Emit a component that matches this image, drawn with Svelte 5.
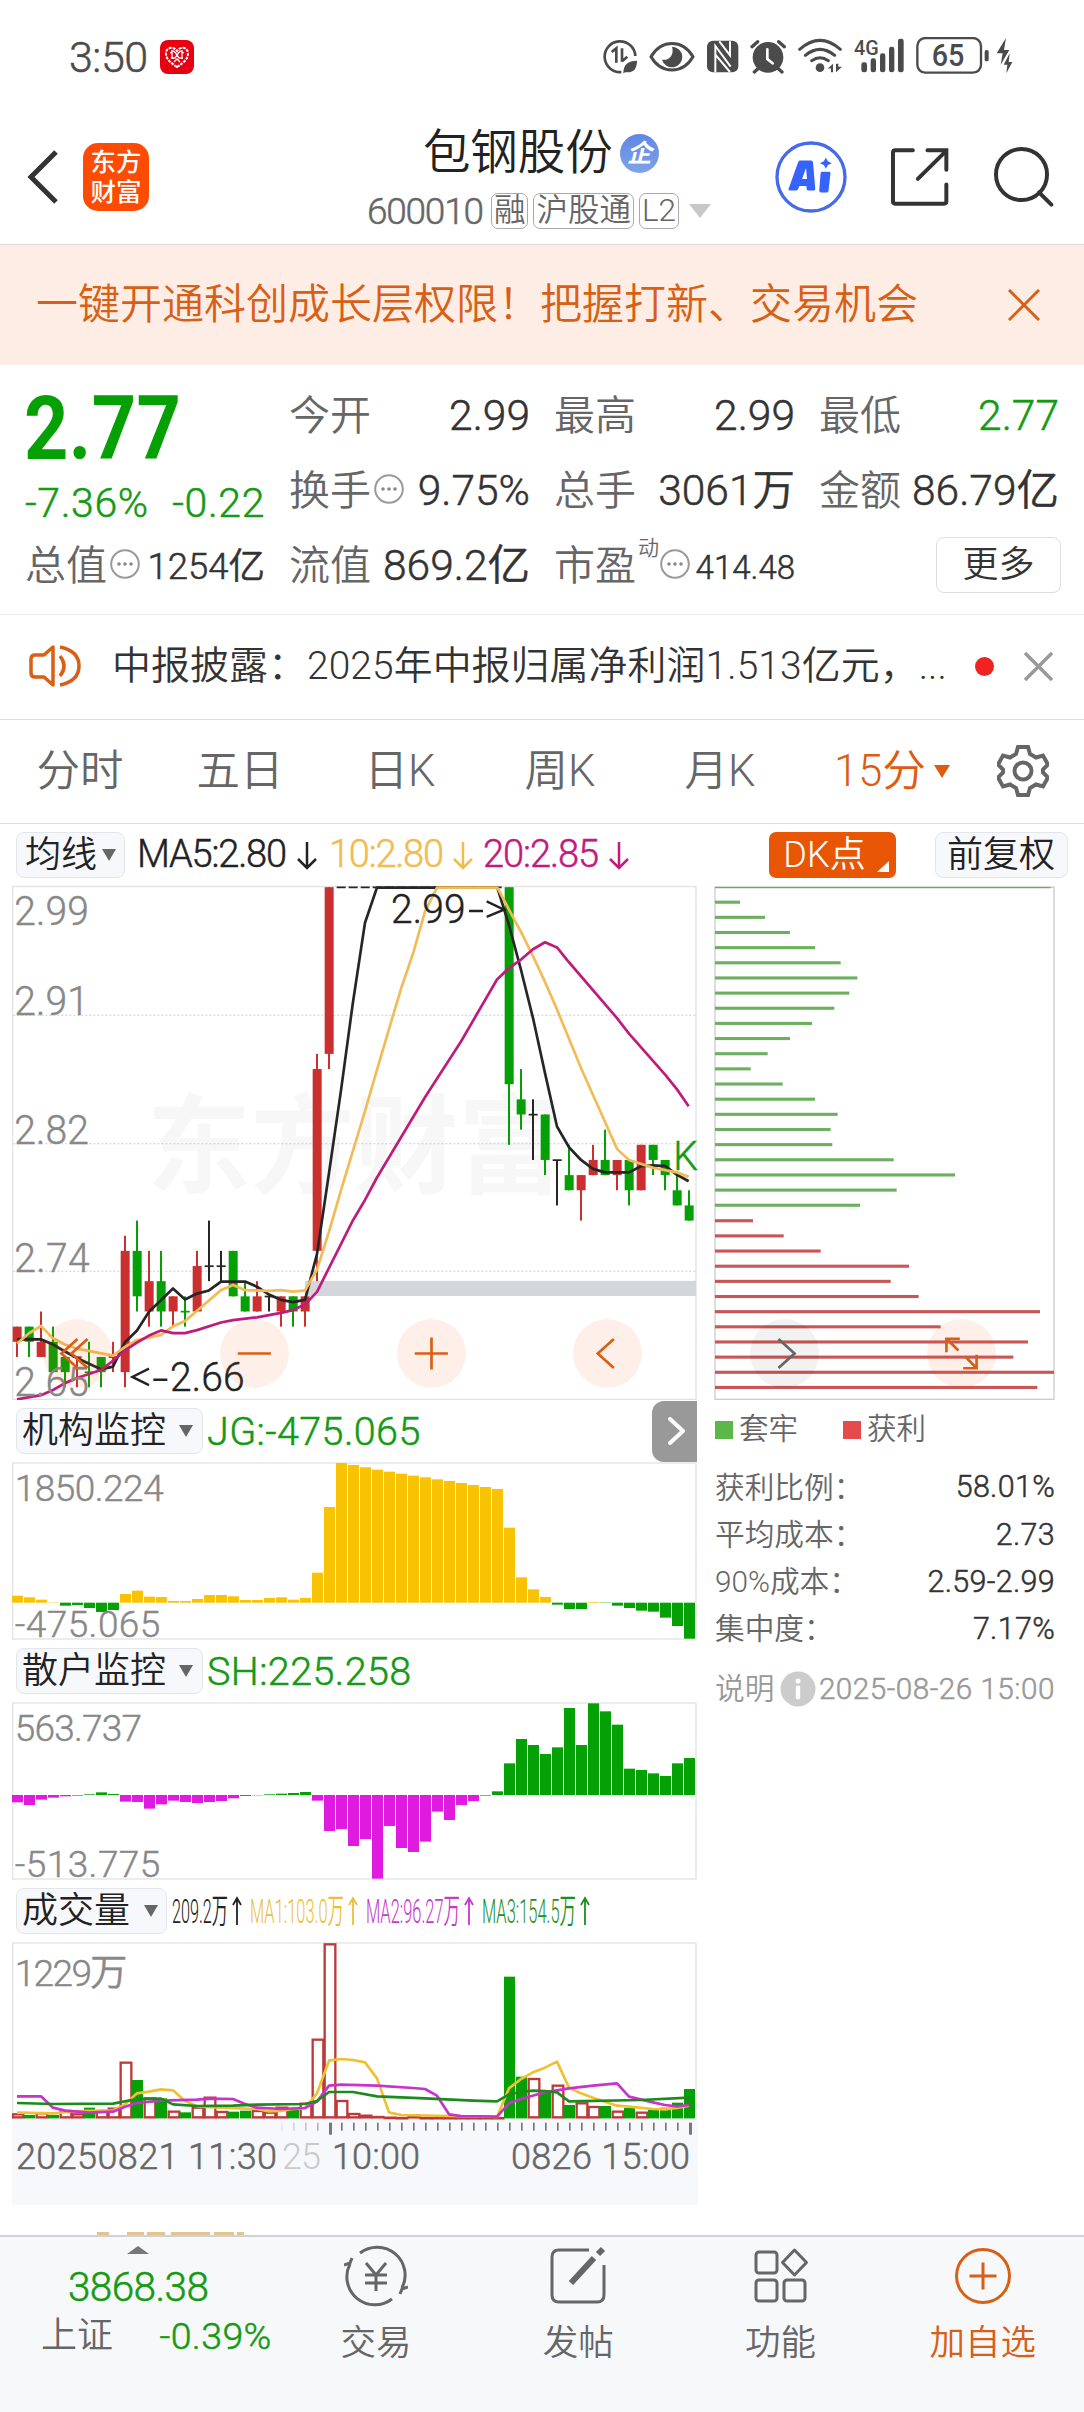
<script lang="ts">
    type Candle = [string, number, number, number, number];
    type Point = [number, number];

    const tabs = ["分时", "五日", "日K", "周K", "月K"];
    let activeTab = "15分";

    // colour, wick top, wick bottom, body top, body bottom (cents under 2.99)
    const candles: Candle[] = [
        ["r", 29, 31, 29, 30], ["g", 29, 31, 29, 30], ["r", 28, 31, 30, 31],
        ["g", 29, 32, 30, 32], ["g", 31, 33, 31, 32], ["r", 31, 33, 31, 31],
        ["g", 30, 33, 32, 32], ["g", 31, 33, 31, 32], ["r", 30, 32, 31, 31],
        ["r", 23, 33, 24, 32], ["g", 22, 28, 24, 27], ["r", 24, 29, 26, 28],
        ["g", 24, 29, 26, 28], ["r", 27, 29, 27, 28], ["g", 27, 29, 28, 28],
        ["r", 24, 28, 25, 28], ["k", 22, 26, 25, 25], ["k", 24, 26, 25, 25],
        ["g", 24, 27, 24, 27], ["g", 26, 28, 27, 28], ["r", 26, 28, 27, 28],
        ["k", 27, 28, 27, 27], ["r", 27, 29, 27, 28], ["g", 27, 29, 27, 28],
        ["r", 27, 29, 27, 28], ["r", 11, 26, 12, 24], ["r", 0, 12, 0, 11],
        ...Array.from({ length: 14 }, () => ["k", 0, 0, 0, 0] as Candle),
        ["g", 0, 17, 0, 13], ["g", 12, 16, 14, 15], ["k", 14, 18, 15, 15],
        ["g", 15, 19, 15, 18], ["k", 18, 21, 18, 18], ["g", 17, 20, 19, 20],
        ["r", 19, 22, 19, 20], ["r", 17, 19, 18, 19], ["g", 16, 19, 18, 19],
        ["r", 18, 20, 18, 19], ["g", 18, 21, 18, 20], ["r", 17, 20, 17, 20],
        ["g", 17, 19, 17, 18], ["g", 18, 20, 18, 19], ["g", 19, 21, 20, 21],
        ["g", 20, 22, 21, 22],
    ];
    const candleColor: Record<string, string> = { r: "#cc2f2f", g: "#05a005", k: "#262626" };

    const ma5 =
        "51,1363 87,1362 123,1363 159,1378 195,1398 231,1417 267,1434 303,1450 339,1442 375,1371 411,1337 447,1283 519,1215 555,1247 591,1230 627,1221 663,1195 735,1195 771,1210 807,1233 843,1248 879,1255 915,1248 951,1115 987,880 1023,640 1058,390 1095,153 1131,51 1492,51 1527,160 1563,290 1599,430 1635,590 1671,745 1707,805 1743,842 1779,868 1815,878 1887,878 1923,860 1960,858 1996,860 2031,885 2066,904";
    const ma10 =
        "51,1375 87,1345 123,1324 159,1360 195,1378 231,1390 339,1410 375,1385 411,1365 483,1350 519,1325 555,1310 591,1280 663,1220 699,1205 735,1220 807,1222 843,1220 879,1224 915,1221 951,1160 987,1050 1023,930 1059,815 1095,700 1131,580 1167,462 1203,345 1240,240 1275,120 1311,51 1492,51 1527,115 1563,180 1599,250 1635,325 1671,405 1743,575 1851,810 1887,842 1960,865 2031,878 2066,891";
    const ma20 =
        "51,1537 123,1525 159,1510 195,1490 231,1475 303,1452 339,1425 375,1395 411,1372 447,1352 483,1337 519,1345 555,1345 591,1336 663,1314 699,1307 771,1299 843,1286 879,1278 915,1262 951,1225 1059,1017 1095,958 1131,893 1275,660 1383,498 1491,318 1527,285 1563,260 1599,230 1635,210 1671,225 1707,268 1851,430 1887,475 1996,595 2031,637 2066,686";

    // holding cost spread, one row per cent
    const trapped = [
        1007, 75, 150, 225, 300, 377, 427, 403, 358, 291, 225, 158, 107, 203, 300, 368, 347, 352,
        536, 720, 545, 435,
    ];
    const profit = [114, 206, 317, 582, 527, 611, 975, 677, 939, 895, 1017, 967];

    const jg = [
        21, 16, 9, 1, -9, -7, -16, -28, -22, 26, 36, 18, 17, 5, 5, 11, 23, 23, 19, 8, 8, 14, 16, 9,
        14, 90, 287, 419, 413, 406, 399, 393, 387, 381, 376, 370, 365, 359, 353, 347, 341, 225, 76,
        40, 17, -6, -19, -19, 2, -1, -9, -16, -24, -27, -45, -70, -108,
    ];
    const sh = [
        -22, -30, -14, -8, -4, -2, 2, 8, 3, -20, -21, -41, -28, -17, -21, -24, -21, -18, -10, -3, -1,
        2, 4, 6, 9, -17, -108, -102, -153, -132, -251, -93, -159, -171, -140, -50, -75, -30, -18, -2,
        11, 95, 168, 150, 123, 143, 261, 150, 275, 251, 211, 79, 75, 65, 57, 95, 111,
    ];

    const volume = [
        15, 10, 18, 10, 25, 15, 32, 25, 32, 170, 115, 63, 60, 23, 18, 35, 65, 22, 20, 23, 25, 20, 35,
        25, 47, 239, 525, 55, 16, 11, 7, 5, 4, 12, 4, 4, 4, 4, 4, 4, 4, 425, 125, 121, 80, 101, 40,
        48, 37, 37, 23, 31, 20, 25, 32, 47, 88,
    ];
    const volumeRed = [
        0, 2, 4, 5, 7, 8, 9, 11, 13, 15, 16, 17, 20, 21, 22, 24, 25, 26, 27, 28, 29, 30, 31, 32, 33,
        34, 35, 36, 37, 38, 39, 40, 43, 45, 47, 48, 50, 52,
    ];

    const vma1: Point[] = [
        [0, 17], [3, 15], [5, 22], [8, 24], [9, 42], [10, 75], [11, 80], [12, 87], [13, 84],
        [14, 52], [15, 36], [17, 32], [20, 28], [21, 21], [22, 22], [23, 28], [24, 30], [25, 75],
        [26, 173], [27, 178], [28, 175], [29, 168], [30, 120], [31, 18], [32, 10], [36, 7],
        [40, 4], [41, 90], [42, 118], [43, 138], [44, 152], [45, 170], [46, 92], [47, 75],
        [48, 62], [50, 38], [51, 35], [53, 28], [54, 27], [55, 31], [56, 38],
    ];
    const vma2: Point[] = [
        [0, 66], [2, 66], [3, 32], [4, 23], [6, 17], [8, 20], [9, 35], [10, 46], [12, 53],
        [15, 56], [16, 59], [18, 58], [19, 43], [20, 32], [22, 28], [24, 31], [25, 50], [26, 98],
        [27, 101], [30, 98], [33, 91], [34, 88], [35, 68], [36, 12], [37, 7], [40, 5], [41, 45],
        [42, 58], [44, 78], [46, 90], [48, 98], [50, 105], [51, 65], [53, 48], [54, 40], [55, 36],
        [56, 40],
    ];
    const vma3: Point[] = [
        [0, 46], [3, 43], [8, 44], [10, 58], [12, 59], [13, 42], [15, 37], [18, 38], [20, 41],
        [24, 43], [25, 52], [26, 79], [28, 79], [30, 66], [34, 60], [38, 53], [40, 51], [41, 72],
        [42, 79], [43, 83], [44, 82], [45, 78], [46, 51], [52, 55], [56, 62],
    ];

    const line = (points: Point[]) =>
        points.map(([i, v]) => `${51 + i * 36},${745 - v}`).join(" ");

    const costs = [
        ["获利比例：", "58.01%"],
        ["平均成本：", "2.73"],
        ["90%成本：", "2.59-2.99"],
        ["集中度：", "7.17%"],
    ];
</script>

{#snippet dots()}
    <svg class="dots" viewBox="0 0 30 30">
        <circle cx="15" cy="15" r="13.8" fill="none" stroke="#999" stroke-width="2" />
        <circle cx="9" cy="15" r="1.8" fill="#888" />
        <circle cx="15" cy="15" r="1.8" fill="#888" />
        <circle cx="21" cy="15" r="1.8" fill="#888" />
    </svg>
{/snippet}

<div class="page">
    <div class="status">
        <span class="time">3:50</span>
        <svg class="app-dot" viewBox="0 0 34 34">
            <rect width="34" height="34" rx="8" fill="#e60012" />
            <path d="M17 27C9 22 6 18 6 13.500C6 7 14 6 17 11C20 6 28 7 28 13.500C28 18 25 22 17 27Z" fill="none" stroke="#fff" stroke-width="2" stroke-dasharray="3 1" />
            <path d="M10 13l4-2 3 4 3-4 4 2M11 18h4l2-3 2 3h4M14 22l3-3 3 3M12 10v9M22 10v9" fill="none" stroke="#fff" stroke-width="1.300" />
        </svg>
        <svg class="status-icons" viewBox="27 39 1230 111" fill="#4b4b4b" stroke="none">
            <path d="M82 144A46 46 0 1 1 124 96" fill="none" stroke="#4b4b4b" stroke-width="8" />
            <path d="M53 84l14-11v43M84 73v40M84 112l16-14" fill="none" stroke="#4b4b4b" stroke-width="8" />
            <path d="M88 148c0-26 14-38 41-38c0 26-12 38-36 34l16-18l-19 22z" />
            <path d="M171 98C202 45 266 45 297 98C266 151 202 151 171 98Z" fill="none" stroke="#4b4b4b" stroke-width="9" />
            <path d="M234 68a31 31 0 1 1-30 39c20 4 38-14 30-39z" />
            <rect x="339" y="50" width="94" height="95" rx="18" />
            <path d="M364 144V66L410 128M364 92l44 52M376 52l32 42V52" fill="none" stroke="#fff" stroke-width="6" />
            <circle cx="522" cy="100" r="46" />
            <path d="M474 68l17-15M571 68l-17-15M492 134l-11 10M553 134l11 10" stroke="#4b4b4b" stroke-width="10" stroke-linecap="round" />
            <path d="M520 76v29l16 13" fill="none" stroke="#fff" stroke-width="8" stroke-linecap="round" />
            <g fill="none" stroke="#4b4b4b" stroke-width="9" stroke-linecap="round">
                <path d="M617 76Q678 22 739 76M634 94Q678 58 722 94M653 110Q678 92 703 110" />
            </g>
            <circle cx="678" cy="131" r="13" />
            <path d="M701 134l16-15v26h-6v-12zM726 119v26l18-17h-11v-9z" />
            <g font-family="Roboto, sans-serif" font-weight="500">
                <text x="780" y="94" font-size="62" textLength="74" lengthAdjust="spacingAndGlyphs">4G</text>
                <text x="1013" y="127" font-size="92" textLength="98" lengthAdjust="spacingAndGlyphs">65</text>
            </g>
            <rect x="802" y="115" width="17" height="30" rx="7" />
            <rect x="830" y="103" width="16" height="42" rx="7" />
            <rect x="858" y="88" width="16" height="57" rx="7" />
            <rect x="885" y="68" width="16" height="77" rx="7" />
            <rect x="912" y="44" width="17" height="101" rx="7" />
            <rect x="970" y="42" width="191" height="104" rx="24" fill="none" stroke="#4b4b4b" stroke-width="7" />
            <rect x="1172" y="78" width="12" height="34" rx="5" />
            <path d="M1236 42l-28 46h18l-6 34l26-44h-16zM1247 88l-18 34h11l-3 26l18-34h-11z" />
        </svg>
    </div>

    <header class="header">
        <svg class="back" viewBox="0 0 32 56"><path d="M29 3L4 28l25 25" /></svg>
        <div class="logo"><span>东方</span><span>财富</span></div>
        <div class="title">
            <div class="name">包钢股份<span class="badge">企</span></div>
            <div class="code">
                <span class="num">600010</span>
                <span class="tag">融</span>
                <span class="tag">沪股通</span>
                <span class="tag">L2</span>
                <svg class="caret" viewBox="0 0 22 14"><path d="M0 0h22L11 14z" fill="#c8c8c8" /></svg>
            </div>
        </div>
        <svg class="ai" viewBox="547 351 218 218">
            <circle cx="656" cy="460" r="103" fill="none" stroke="#456be8" stroke-width="10" />
            <path d="M622 410h34q5 0 6 5l7 82q0 4-5 4h-16q-4 0-5-4l-1-10h-21l-5 11q-1 3-5 3h-20q-4 0-3-5l29-81q2-5 5-5zM641 432l-12 34h15zM689 444h22q4 0 4 5l-6 53q-1 5-5 5h-18q-5 0-5-5l4-53q1-5 4-5zM701 401l6 11 12 6-12 6-6 11-6-11-12-6 12-6z" fill="#3563fb" />
        </svg>
        <svg class="share" viewBox="890 370 178 178">
            <path d="M959 380h-53q-7 0-7 7v147q0 7 7 7h147q7 0 7-7v-51M1003 380h57v59M974 466l84-83" />
        </svg>
        <svg class="search" viewBox="1200 366 184 184">
            <circle cx="1286" cy="452" r="77" />
            <path d="M1339 506l37 37" />
        </svg>
    </header>

    <div class="banner">
        <span>一键开通科创成长层权限！把握打新、交易机会</span>
        <svg viewBox="0 0 32 32"><path d="M1 1l30 30M31 1L1 31" /></svg>
    </div>

    <section class="quotes">
        <div class="price">
            <div class="last">2.77</div>
            <div class="change"><span>-7.36%</span><span>-0.22</span></div>
        </div>
        <div class="cell"><label>今开</label><b>2.99</b></div>
        <div class="cell"><label>最高</label><b>2.99</b></div>
        <div class="cell"><label>最低</label><b class="down">2.77</b></div>
        <div class="cell"><label>换手</label>{@render dots()}<b>9.75%</b></div>
        <div class="cell"><label>总手</label><b>3061万</b></div>
        <div class="cell"><label>金额</label><b>86.79亿</b></div>
        <div class="cell"><label>总值</label>{@render dots()}<b class="mid">1254亿</b></div>
        <div class="cell"><label>流值</label><b>869.2亿</b></div>
        <div class="cell"><label>市盈</label><sup>动</sup>{@render dots()}<b class="small">414.48</b></div>
        <div class="cell"><button class="more">更多</button></div>
    </section>

    <div class="notice">
        <svg class="horn" viewBox="0 0 52 44">
            <path d="M24 3v38l-9-8H6q-4 0-4-4V15q0-4 4-4h9zM31 12q8 10 0 20M31 3q19 4 19 19t-19 19" />
        </svg>
        <span class="news">中报披露：2025年中报归属净利润1.513亿元，...</span>
        <i></i>
        <svg class="close" viewBox="0 0 29 29"><path d="M1 1l27 27M28 1L1 28" /></svg>
    </div>

    <nav class="tabs">
        {#each tabs as tab}
            <button class:active={activeTab === tab} on:click={() => (activeTab = tab)}>{tab}</button>
        {/each}
        <button class="period" class:active={activeTab === "15分"} on:click={() => (activeTab = "15分")}>
            15分<svg viewBox="0 0 16 13"><path d="M0 0h16L8 13z" fill="currentColor" /></svg>
        </button>
        <svg class="gear" viewBox="0 0 52 52">
            <path d="M21 2h10l2 7 6 3.500 7-2 5 9-5 5v3l5 5-5 9-7-2-6 3.500-2 7H21l-2-7-6-3.500-7 2-5-9 5-5v-3l-5-5 5-9 7 2 6-3.500z" />
            <circle cx="26" cy="26" r="8.500" />
        </svg>
    </nav>

    <div class="ma-row">
        <button class="pick ma">均线<svg viewBox="0 0 14 12"><path d="M0 0h14L7 12z" /></svg></button>
        <svg class="ma-text" viewBox="0 0 500 40">
            <g stroke-width="0.5">
                <text x="-2" y="32" textLength="150" fill="#222" stroke="#222">MA5:2.80</text>
                <text x="190" y="32" textLength="115" fill="#f2bb4e" stroke="#f2bb4e">10:2.80</text>
                <text x="344" y="32" textLength="116" fill="#c2197f" stroke="#c2197f">20:2.85</text>
            </g>
            <path d="M168 7v26M159 24l9 9 9-9" stroke="#222" />
            <path d="M324 7v26M315 24l9 9 9-9" stroke="#f2bb4e" />
            <path d="M480 7v26M471 24l9 9 9-9" stroke="#c2197f" />
        </svg>
        <button class="dk">DK点</button>
        <button class="pick adjust">前复权</button>
    </div>

    <main class="charts">
        <div class="left">
            <svg class="plot price-plot" viewBox="36 43.6 2058 1495.4" preserveAspectRatio="none">
                <text class="watermark" x="440" y="915">东方财富</text>
                <rect class="frame" x="38" y="48" width="2050" height="1489" />
                <path class="grid" d="M40 422H2086M40 795H2086M40 1165H2086" />
                <rect x="915" y="1193" width="1173" height="44" fill="#d3d7dc" />
                {#each candles as [color, top, bottom, bodyTop, bodyBottom], i}
                    <g fill={candleColor[color]}>
                        <rect x={48 + i * 36} y={50 + top * 44} width="6" height={(bottom - top) * 44} />
                        <rect
                            x={38 + i * 36}
                            y={(bodyTop === bodyBottom ? 48 : 50) + bodyTop * 44}
                            width="27"
                            height={Math.max((bodyBottom - bodyTop) * 44, 5)}
                        />
                    </g>
                {/each}
                <polyline points={ma5} stroke="#262626" />
                <polyline points={ma10} stroke="#f2bb55" />
                <polyline points={ma20} stroke="#bf1a7c" />
                <g class="axis" font-size="117">
                    <text x="43" y="160" textLength="224">2.99</text>
                    <text x="43" y="421" textLength="224">2.91</text>
                    <text x="43" y="796" textLength="224">2.82</text>
                    <text x="43" y="1167" textLength="226">2.74</text>
                    <text x="43" y="1527" textLength="224">2.65</text>
                </g>
                <g class="mark" font-size="117" fill="#222" stroke="#222">
                    <text x="510" y="1512" textLength="224">2.66</text>
                    <text x="1173" y="153" textLength="224">2.99</text>
                    <text x="2020" y="870" fill="#149a14" stroke="#149a14">K</text>
                    <path d="M447 1448l-50 24 50 24M460 1480h42M1407 119h42M1460 91l52 24-52 21" />
                </g>
            </svg>

            <div class="sub-head">
                <button class="pick">机构监控<svg viewBox="0 0 14 12"><path d="M0 0h14L7 12z" /></svg></button>
                <span class="reading jg">JG:-475.065</span>
                <button class="fold"><svg viewBox="0 0 17 28"><path d="M2 2l13 12L2 26" /></svg></button>
            </div>
            <svg class="plot" viewBox="36 216 2058 534">
                <rect class="frame" x="38" y="219" width="2050" height="528" />
                {#each jg as v, i}
                    <rect
                        x={36 + i * 36}
                        y={638 - Math.max(v, 0)}
                        width="33"
                        height={Math.abs(v)}
                        fill={v > 0 ? "#f7c302" : "#05a005"}
                    />
                {/each}
                <g class="axis" font-size="111">
                    <text x="44" y="332" textLength="447">1850.224</text>
                    <text x="44" y="740" textLength="437">-475.065</text>
                </g>
            </svg>

            <div class="sub-head">
                <button class="pick">散户监控<svg viewBox="0 0 14 12"><path d="M0 0h14L7 12z" /></svg></button>
                <span class="reading sh">SH:225.258</span>
            </div>
            <svg class="plot" viewBox="36 216 2058 534">
                <rect class="frame" x="38" y="219" width="2050" height="528" />
                {#each sh as v, i}
                    <rect
                        x={36 + i * 36}
                        y={495 - Math.max(v, 0)}
                        width="33"
                        height={Math.abs(v)}
                        fill={v > 0 ? "#05a005" : "#e01be0"}
                    />
                {/each}
                <g class="axis" font-size="111">
                    <text x="44" y="332" textLength="382">563.737</text>
                    <text x="44" y="740" textLength="437">-513.775</text>
                </g>
            </svg>

            <div class="sub-head">
                <button class="pick vol">成交量<svg viewBox="0 0 14 12"><path d="M0 0h14L7 12z" /></svg></button>
                <svg class="vol-text" viewBox="0 0 430 40">
                    <g font-size="34">
                        <text x="0" y="34" textLength="56" lengthAdjust="spacingAndGlyphs" fill="#222">209.2万</text>
                        <text x="78" y="34" textLength="94" lengthAdjust="spacingAndGlyphs" fill="#ecbe3c">MA1:103.0万</text>
                        <text x="194" y="34" textLength="94" lengthAdjust="spacingAndGlyphs" fill="#c738cc">MA2:96.27万</text>
                        <text x="310" y="34" textLength="94" lengthAdjust="spacingAndGlyphs" fill="#1c8f1c">MA3:154.5万</text>
                    </g>
                    <path d="M65 36V9M61 16l4-7 4 7" stroke="#222" />
                    <path d="M181 36V9M177 16l4-7 4 7" stroke="#ecbe3c" />
                    <path d="M297 36V9M293 16l4-7 4 7" stroke="#c738cc" />
                    <path d="M413 36V9M409 16l4-7 4 7" stroke="#1c8f1c" />
                </svg>
            </div>
            <svg class="plot" viewBox="36 216 2058 534">
                <rect class="frame" x="38" y="219" width="2050" height="528" />
                {#each volume as v, i}
                    {#if volumeRed.includes(i)}
                        <rect
                            x={38 + i * 36}
                            y={748 - v}
                            width="32"
                            height={Math.max(v - 6, 1)}
                            fill="#fff"
                            stroke="#bd3a3a"
                            stroke-width="7"
                        />
                    {:else}
                        <rect x={36 + i * 36} y={745 - v} width="33" height={v} fill="#05a005" />
                    {/if}
                {/each}
                <polyline points={line(vma1)} stroke="#efc02f" />
                <polyline points={line(vma2)} stroke="#c733cb" />
                <polyline points={line(vma3)} stroke="#1c8a1c" />
                <text class="axis" x="44" y="348" font-size="111" textLength="338">1229万</text>
            </svg>

            <div class="timeline">
                <svg viewBox="36 0 2058 44">
                    {#each Array(35) as _, i}
                        <rect
                            x={843 + i * 36}
                            y="8"
                            width={i === 4 || i === 34 ? 9 : 5}
                            height={i === 4 || i === 34 ? 36 : 24}
                            fill={i < 4 ? "#b5b5b5" : "#777"}
                            opacity={i < 4 ? 0.25 + i * 0.25 : 1}
                        />
                    {/each}
                </svg>
                <svg class="dates" viewBox="12 0 686 60">
                    <text x="16" y="33.500" textLength="261">20250821 11:30</text>
                    <text class="faded" x="282" y="33.500" textLength="39">25</text>
                    <text x="332" y="33.500" textLength="88">10:00</text>
                    <text x="511" y="33.500" textLength="179">0826 15:00</text>
                </svg>
            </div>
        </div>

        <aside class="right">
            <svg class="spread" viewBox="42 43.6 1026 1495.4" preserveAspectRatio="none">
                <rect x="45" y="50" width="1017" height="1487" fill="none" stroke="#ccc" stroke-width="4" />
                {#each trapped as w, i}
                    <rect x="45" y={(i ? 45 : 49) + i * 44} width={w} height={i ? 9 : 4} fill="#6cb05f" />
                {/each}
                {#each profit as w, i}
                    <rect x="45" y={1014 + i * 44} width={w} height="9" fill="#c95656" />
                {/each}
            </svg>
            <div class="legend">
                <i class="lose"></i><span>套牢</span>
                <i class="gain"></i><span>获利</span>
            </div>
            {#each costs as [name, value]}
                <div class="cost"><span>{name}</span><b>{value}</b></div>
            {/each}
            <div class="explain">
                <span>说明</span>
                <svg viewBox="0 0 36 36">
                    <circle cx="18" cy="18" r="17.500" fill="#ccc" />
                    <circle cx="18" cy="10" r="2.500" fill="#fff" />
                    <rect x="15.800" y="14.500" width="4.400" height="14" rx="2" fill="#fff" />
                </svg>
                <span class="date">2025-08-26 15:00</span>
            </div>
        </aside>

        <div class="tools">
            <button><svg viewBox="-103 -103 206 206"><path d="M0-43l-48 43 48 43M30-43l-48 43 48 43" /></svg></button>
            <button><svg viewBox="-103 -103 206 206"><path d="M-50 0h99" /></svg></button>
            <button><svg viewBox="-103 -103 206 206"><path d="M-50 0h99M0-48v96" /></svg></button>
            <button><svg viewBox="-103 -103 206 206"><path d="M19-43l-48 43 48 43" /></svg></button>
            <button class="muted"><svg viewBox="-103 -103 206 206"><path d="M-18-43l48 43-48 43" /></svg></button>
            <button><svg viewBox="-103 -103 206 206"><path d="M-5-44h-40v40M-45-44l36 35M45 4v40h-40M45 44L10 8" /></svg></button>
        </div>
    </main>

    <svg class="peek" viewBox="0 0 160 3" fill="#e3c48f">
        <path d="M0 0h12v3H0zM30 0h17v3H30zM50 0h18v3H50zM74 0h39v3H74zM117 0h20v3h-20zM140 0h7v3h-7z" />
    </svg>

    <footer class="bottom">
        <div class="index">
            <svg class="up" viewBox="0 0 22 8"><path d="M0 8h22L11 0z" fill="#777" /></svg>
            <div class="point">3868.38</div>
            <div class="row"><span>上证</span><b>-0.39%</b></div>
        </div>
        <div class="item">
            <svg viewBox="-32 -32 64 64">
                <path d="M-16-23A28 28 0 0 1 26 12M24 18l2-5 6-2M16 23A28 28 0 0 1-26-12M-24-18l-2 5-6 2" />
                <path d="M-10-13L0-1 10-13M0-1v16M-11-1h22M-11 7h22" />
            </svg>
            <span>交易</span>
        </div>
        <div class="item">
            <svg viewBox="-32 -32 64 64">
                <path d="M11-26h-30q-7 0-7 7v38q0 7 7 7h38q7 0 7-7v-30" />
                <path d="M-7 7L16-18" stroke-width="6" />
                <path d="M20-22l5-5" stroke-width="6" />
            </svg>
            <span>发帖</span>
        </div>
        <div class="item">
            <svg viewBox="-32 -32 64 64">
                <rect x="-25" y="-24" width="21" height="21" rx="3" />
                <rect x="-25" y="4" width="21" height="21" rx="3" />
                <rect x="3" y="4" width="21" height="21" rx="3" />
                <path d="M13.500-26l12 12.500-12 12.500-12-12.500z" stroke-linejoin="round" />
            </svg>
            <span>功能</span>
        </div>
        <div class="item add">
            <svg viewBox="-32 -32 64 64">
                <circle r="26.500" />
                <path d="M-13.500 0h27M0-13.500v27" />
            </svg>
            <span>加自选</span>
        </div>
    </footer>
</div>

<style>
    :global(body) {
        margin: 0;
        background: #fff;
    }
    .page {
        width: 1084px;
        height: 2412px;
        overflow: hidden;
        display: flex;
        flex-direction: column;
        font-family: Roboto, "Noto Sans CJK SC", sans-serif;
        font-weight: 350;
        line-height: 1;
        color: #333;
        white-space: nowrap;
        background: #fff;
    }
    .page > * {
        flex: none;
        box-sizing: border-box;
    }
    button {
        font: inherit;
        color: inherit;
        border: none;
        padding: 0;
        background: none;
    }
    b {
        font-weight: inherit;
    }
    /* the light digits need a little more body next to the hanzi */
    b,
    .time,
    .num,
    .change,
    .reading,
    .point,
    .date {
        -webkit-text-stroke: 0.5px currentColor;
    }
    svg {
        display: block;
        flex: none;
    }

    /* status bar */
    .status {
        height: 104px;
        padding: 37px 0 0 69px;
        display: flex;
    }
    .time {
        width: 91px;
        font-size: 43px;
        line-height: 41px;
        letter-spacing: -0.5px;
        color: #4b4b4b;
    }
    .app-dot {
        width: 34px;
        height: 34px;
        margin-top: 3px;
    }
    .status-icons {
        width: 410px;
        height: 37px;
        margin-left: 409px;
    }

    /* header */
    .header {
        height: 141px;
        padding: 0 30px 0 27px;
        border-bottom: 1.5px solid #dadada;
        display: flex;
        align-items: flex-start;
    }
    .back {
        width: 32px;
        height: 56px;
        margin-top: 45px;
    }
    .back path {
        fill: none;
        stroke: #333;
        stroke-width: 5;
    }
    .logo {
        width: 67px;
        height: 68px;
        margin: 39px 0 0 24px;
        border-radius: 15px;
        background: #fd4b03;
        color: #fff;
        font-size: 25.5px;
        font-weight: 500;
        display: flex;
        flex-direction: column;
        align-items: center;
        justify-content: center;
        line-height: 30px;
    }
    .title {
        width: 345px;
        margin: 24px 0 0 218px;
    }
    .name {
        display: flex;
        padding-left: 56px;
        font-size: 47.5px;
        line-height: 50px;
        color: #222;
    }
    .badge {
        width: 39px;
        height: 39px;
        margin: 6px 0 0 7px;
        border-radius: 50%;
        background: linear-gradient(#5f87e4, #7ea3ea);
        color: #fff;
        font-size: 25px;
        font-weight: 700;
        font-style: italic;
        line-height: 39px;
        text-align: center;
    }
    .code {
        display: flex;
        align-items: center;
        margin-top: 14px;
        height: 38px;
        font-size: 37px;
        color: #666;
    }
    .num {
        width: 124px;
        letter-spacing: -1.2px;
    }
    .tag {
        border: 1.5px solid #aaa;
        border-radius: 7px;
        font-size: 31.5px;
        line-height: 34px;
        padding: 0 2px;
        margin-right: 5px;
    }
    .caret {
        width: 22px;
        height: 14px;
        margin-left: 5px;
    }
    .ai {
        width: 72px;
        height: 72px;
        margin: 37px 0 0 64px;
    }
    .share,
    .search {
        fill: none;
        stroke: #333;
        stroke-width: 12;
        stroke-linecap: round;
    }
    .share {
        width: 59px;
        height: 59px;
        margin: 43px 0 0 43px;
    }
    .search {
        width: 61px;
        height: 61px;
        margin: 42px 0 0 44px;
    }

    .banner {
        height: 120px;
        padding: 0 44px 0 36px;
        display: flex;
        align-items: center;
        justify-content: space-between;
        background: #fdede4;
        color: #d85f16;
        font-size: 42px;
    }
    .banner svg {
        width: 32px;
        height: 32px;
        stroke: #d85f16;
        stroke-width: 3;
    }

    /* quotes */
    .quotes {
        height: 250px;
        padding: 14px 0 0 25px;
        border-bottom: 1.5px solid #ececec;
        display: grid;
        grid-template-columns: 240px 241px 241px 240px;
        grid-template-rows: 75px 75px 75px;
        column-gap: 24px;
    }
    .price {
        grid-row: span 2;
    }
    .last {
        margin: 14px 0 0 -1px;
        height: 72px;
        font-size: 89px;
        font-weight: 700;
        line-height: 72px;
        letter-spacing: 0.5px;
        color: #04a004;
        transform: scaleX(0.87);
        transform-origin: 0 0;
    }
    .change {
        display: flex;
        justify-content: space-between;
        margin-top: 18px;
        font-size: 41px;
        letter-spacing: 0.6px;
        color: #149a14;
    }
    .cell {
        display: flex;
        align-items: center;
        font-size: 42.5px;
    }
    .cell label {
        font-size: 41px;
        color: #666;
    }
    .cell b {
        margin-left: auto;
    }
    .cell .down {
        color: #149a14;
    }
    .cell .mid {
        font-size: 36.5px;
        padding-top: 2px;
    }
    .cell .small {
        font-size: 33px;
        padding-top: 2px;
    }
    .dots {
        width: 30px;
        height: 30px;
        margin: -5px 0 0 3px;
    }
    sup {
        align-self: flex-start;
        margin: 9px 0 0 2px;
        font-size: 21px;
        color: #666;
    }
    sup + .dots {
        margin-left: 1px;
    }
    .more {
        margin: -3px -2px 0 auto;
        width: 125px;
        height: 56px;
        box-sizing: border-box;
        border: 1.5px solid #ddd;
        border-radius: 8px;
        font-size: 36px;
    }

    .notice {
        height: 105px;
        padding: 0 31px 2px 29px;
        border-bottom: 1.5px solid #dcdcdc;
        display: flex;
        align-items: center;
    }
    .horn {
        width: 52px;
        height: 44px;
        fill: none;
        stroke: #d85f16;
        stroke-width: 3.5;
        stroke-linejoin: round;
    }
    .news {
        margin-left: 31px;
        width: 863px;
        font-size: 38.9px;
        letter-spacing: 0.1px;
    }
    .notice i {
        width: 19px;
        height: 19px;
        border-radius: 50%;
        background: #f02323;
    }
    .close {
        width: 29px;
        height: 29px;
        margin-left: auto;
        stroke: #999;
        stroke-width: 3.5;
    }

    /* period tabs */
    .tabs {
        height: 104px;
        border-bottom: 1.5px solid #dcdcdc;
        display: flex;
        align-items: center;
        font-size: 43.5px;
        color: #666;
    }
    .tabs button {
        width: 160px;
    }
    .tabs .period {
        display: flex;
        align-items: center;
        width: 167px;
        padding-left: 34px;
        box-sizing: border-box;
    }
    .tabs .period svg {
        width: 16px;
        height: 13px;
        margin-left: 8px;
    }
    .tabs .active {
        color: #dd5c0f;
    }
    .gear {
        width: 52px;
        height: 52px;
        margin: -1px 0 0 30px;
        fill: none;
        stroke: #666;
        stroke-width: 4;
    }

    .ma-row {
        height: 61px;
        padding: 0 16px;
        display: flex;
        align-items: center;
    }
    .pick {
        width: 187px;
        height: 46px;
        box-sizing: border-box;
        display: flex;
        align-items: center;
        padding: 0 9px 0 5px;
        border: 1.5px solid #e2e5ea;
        border-radius: 8px;
        background: #f7f8fb;
        color: #222;
        font-size: 36px;
    }
    .pick svg {
        width: 14px;
        height: 12px;
        margin-left: auto;
        fill: #666;
    }
    .pick.ma {
        width: 109px;
        padding: 0 8px;
    }
    .pick.vol {
        width: 151px;
        padding-right: 8px;
    }
    .pick.adjust {
        width: 133px;
        margin-left: 39px;
        padding: 0 0 0 11px;
    }
    .ma-text {
        width: 500px;
        height: 40px;
        margin-left: 14px;
        font-size: 38px;
        overflow: visible;
    }
    .ma-text path,
    .vol-text path {
        fill: none;
        stroke-width: 2.5;
    }
    .dk {
        position: relative;
        flex: none;
        width: 127px;
        height: 46px;
        margin-left: 130px;
        padding-right: 16px;
        border-radius: 7px;
        background: #e85605;
        color: #fff;
        font-size: 36px;
    }
    .dk::after {
        content: "";
        position: absolute;
        right: 7px;
        bottom: 6px;
        border-left: 12px solid transparent;
        border-bottom: 11px solid #fff;
    }

    /* charts */
    .charts {
        position: relative;
        height: 1320px;
        padding-left: 12px;
        display: flex;
    }
    .left {
        width: 686px;
    }
    .plot {
        width: 686px;
        height: 178px;
    }
    .price-plot {
        height: 515px;
    }
    .plot polyline {
        fill: none;
        stroke-width: 8;
        stroke-linejoin: round;
    }
    .frame {
        fill: none;
        stroke: #e3e3e3;
        stroke-width: 4;
    }
    .grid {
        fill: none;
        stroke: #ccc;
        stroke-width: 3;
        stroke-dasharray: 6 6;
    }
    .watermark {
        font-size: 312px;
        font-weight: 700;
        fill: #f7f7f7;
    }
    .axis {
        fill: #888;
        stroke: #888;
        stroke-width: 1.3;
    }
    .mark text {
        stroke-width: 1.3;
    }
    .mark path {
        fill: none;
        stroke-width: 7;
    }
    .sub-head {
        height: 62px;
        padding-left: 4px;
        display: flex;
        align-items: center;
    }
    .reading {
        margin-left: 4px;
        padding-top: 1px;
        font-size: 39.5px;
        letter-spacing: 0.4px;
        color: #149a14;
    }
    .fold {
        width: 45px;
        height: 61px;
        margin: 0 1px 0 auto;
        border-radius: 12px 0 0 12px;
        background: #999;
        display: flex;
        align-items: center;
        padding-left: 16px;
    }
    .fold svg {
        width: 17px;
        height: 28px;
        fill: none;
        stroke: #fff;
        stroke-width: 4;
        stroke-linecap: round;
        stroke-linejoin: round;
    }
    .vol-text {
        width: 430px;
        height: 40px;
        margin: -5px 0 0 5px;
    }
    .vol-text path {
        stroke-width: 1.8;
    }
    .timeline {
        height: 85px;
        background: #f7f8fb;
    }
    .timeline svg {
        width: 686px;
        height: 14.7px;
    }
    .timeline .dates {
        height: 60px;
        font-size: 36px;
        fill: #666;
        stroke: #666;
        stroke-width: 0.5;
    }
    .dates .faded {
        fill: #cacaca;
        stroke: none;
    }

    .right {
        width: 342px;
        margin-left: 16px;
    }
    .spread {
        width: 342px;
        height: 515px;
    }
    .legend {
        display: flex;
        align-items: center;
        height: 46px;
        margin: 7px 0 11px 1px;
        font-size: 29.5px;
        color: #666;
    }
    .legend i {
        width: 18px;
        height: 18px;
        margin-right: 6px;
    }
    .legend .lose {
        background: #5bb74a;
    }
    .legend .gain {
        margin-left: 45px;
        background: #e64b4b;
    }
    .cost {
        height: 47.2px;
        display: flex;
        align-items: center;
        justify-content: space-between;
        margin: 0 1px;
        font-size: 29.7px;
        color: #666;
    }
    .cost b {
        color: #333;
        font-size: 30.5px;
        letter-spacing: 0.3px;
    }
    .explain {
        display: flex;
        align-items: center;
        height: 36px;
        margin: 18px 1px 0;
        font-size: 29.7px;
        color: #999;
    }
    .explain svg {
        width: 36px;
        height: 36px;
        margin: 0 2px 0 6px;
    }
    .explain .date {
        margin-left: auto;
        letter-spacing: 0.5px;
    }

    .tools {
        position: absolute;
        left: 43px;
        top: 434px;
        display: flex;
        gap: 107.8px;
    }
    .tools button {
        width: 69px;
        height: 69px;
        border-radius: 50%;
        background: rgba(240, 90, 10, 0.09);
    }
    .tools .muted {
        background: rgba(0, 0, 0, 0.05);
    }
    .tools path {
        fill: none;
        stroke: #d85f16;
        stroke-width: 8;
    }
    .tools .muted path {
        stroke: #666;
    }

    .peek {
        width: 160px;
        height: 3px;
        margin: 27px 0 0 97px;
    }

    /* bottom bar */
    .bottom {
        height: 177px;
        border-top: 2px solid #d0d2d6;
        background: #f7f8fa;
        display: flex;
        color: #666;
    }
    .index {
        width: 275px;
    }
    .up {
        width: 22px;
        height: 8px;
        margin: 9px 0 0 127px;
    }
    .point {
        margin: 13px 0 0 68px;
        font-size: 40.5px;
        letter-spacing: -0.6px;
        color: #149a14;
    }
    .row {
        display: flex;
        align-items: center;
        justify-content: space-between;
        margin: 10px 3px 0 41px;
        font-size: 36px;
    }
    .row b {
        color: #149a14;
        font-size: 37.5px;
        letter-spacing: 0.4px;
    }
    .item {
        width: 202.5px;
        display: flex;
        flex-direction: column;
        align-items: center;
        padding-top: 7px;
        font-size: 35.5px;
    }
    .item svg {
        width: 64px;
        height: 64px;
        fill: none;
        stroke: #666;
        stroke-width: 3;
    }
    .item span {
        margin-top: 18px;
    }
    .add {
        color: #d85f16;
    }
    .add svg {
        stroke: #d85f16;
    }
</style>
